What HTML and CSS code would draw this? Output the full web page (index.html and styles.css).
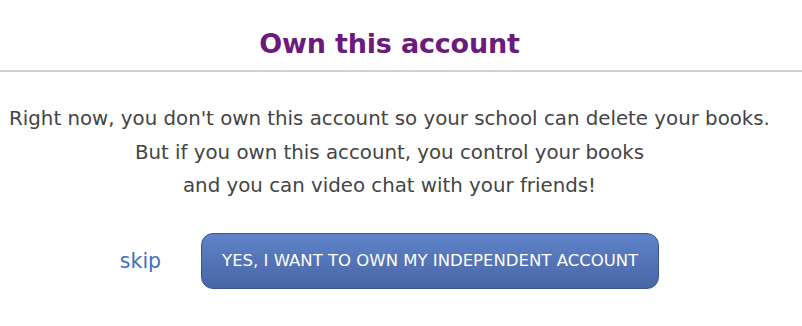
FILE: index.html
```html
<!DOCTYPE html>
<html lang="en">
<head>
<meta charset="utf-8">
<title>Own this account</title>
<link rel="stylesheet" href="styles.css">
</head>
<body>
<div class="dialog">
  <header class="dialog-header">
    <h1 class="dialog-title">Own this account</h1>
  </header>
  <div class="dialog-body">
    <p class="message">Right now, you don't own this account so your school can delete your books.<br>
    But if you own this account, you control your books<br>
    and you can video chat with your friends!</p>
    <div class="actions">
      <a class="skip" href="#">skip</a>
      <button class="primary" type="button">YES, I WANT TO OWN MY INDEPENDENT ACCOUNT</button>
    </div>
  </div>
</div>
</body>
</html>
```
FILE: styles.css
```css
html, body {
  margin: 0;
  padding: 0;
  background: #ffffff;
}
body {
  font-family: "DejaVu Sans", "Open Sans", sans-serif;
  color: #444444;
}
.dialog {
  width: 802px;
}
.dialog-header {
  border-bottom: 2px solid #d0d0d0;
  height: 72px;
  box-sizing: border-box;
  padding: 28px 23px 0 0;
  text-align: center;
}
.dialog-title {
  margin: 0;
  font-size: 27px;
  line-height: normal;
  font-weight: 700;
  color: #6b1a7e;
  letter-spacing: -0.2px;
}
.dialog-body {
  display: flex;
  flex-direction: column;
  align-items: center;
  padding-right: 23px;
}
.message {
  margin: 30px 0 0 0;
  text-align: center;
  font-size: 19.8px;
  line-height: 33.5px;
  color: #444444;
  white-space: nowrap;
}
.actions {
  display: flex;
  align-items: center;
  gap: 40px;
  margin-top: 30px;
}
.skip {
  color: #3f6fbf;
  text-decoration: none;
  font-size: 20.5px;
}
.primary {
  font-family: inherit;
  height: 56px;
  width: 458px;
  border-radius: 12px;
  border: 1px solid #3d5590;
  background: linear-gradient(#5f83c9, #4966a6);
  color: #ffffff;
  font-size: 16.5px;
  padding: 0;
  cursor: pointer;
}
```
